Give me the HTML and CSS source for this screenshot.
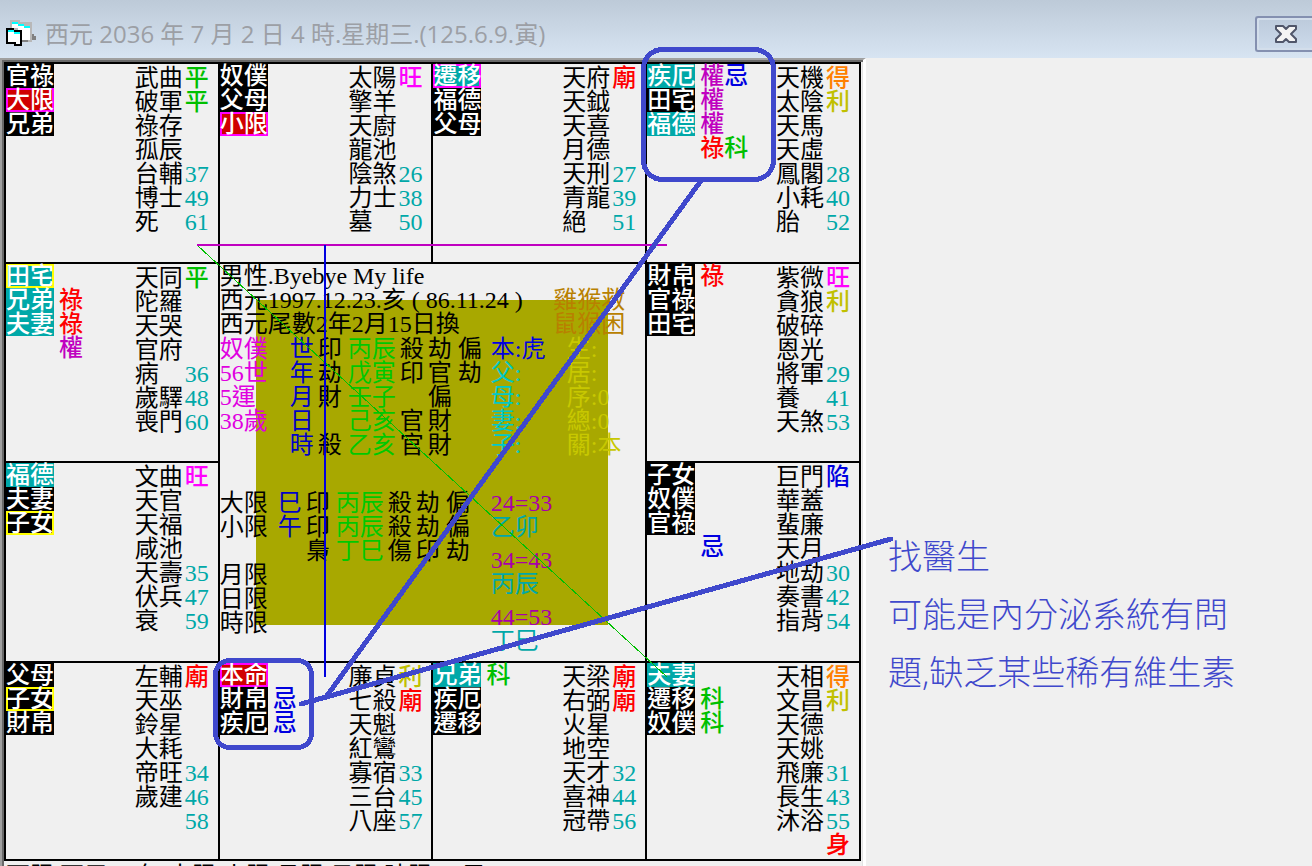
FILE: index.html
```html
<!DOCTYPE html>
<html lang="zh-Hant">
<head>
    <meta charset="UTF-8">
    <meta name="viewport" content="width=device-width, initial-scale=1.0">
    <title>西元 2036 年 7 月 2 日 4 時.星期三.(125.6.9.寅)</title>
    <link rel="stylesheet" href="styles.css">
</head>
<body>
    <!-- Title bar -->
    <header class="titlebar">
        <svg class="app-icon" width="32" height="28" viewBox="0 0 32 28" shape-rendering="crispEdges" aria-hidden="true">
            <path d="M4 0h10v2h12v20H10V10H4z" fill="#b8b8b8"/>
            <path d="M6 4h8v2h10v14H12V8H6z" fill="#fff"/>
            <path d="M6 2h6v2H6zM12 4h6v2h-6zM18 6h6v2h-6z" fill="#00ffff"/>
            <path d="M26 14h2v2h2v4h-4zM16 20h6v2h-6z" fill="#808080"/>
            <path d="M0 8h8v2h8v16H8v-2H0z" fill="#000"/>
            <path d="M2 12h12v12h-4v-2H2z" fill="#fff"/>
            <path d="M2 10h6v2H2zM8 12h6v2H8z" fill="#00ffff"/>
        </svg>
        <h1>西元 2036 年 7 月 2 日 4 時.星期三.(125.6.9.寅)</h1>
        <button class="close" aria-label="Close">
            <svg width="22" height="18" viewBox="0 0 22 18" aria-hidden="true">
                <path d="M1 1h7l3 3 3-3h7v3l-5 5 5 5v3h-7l-3-3-3 3H1v-3l5-5-5-5z" fill="#f4f4f4" stroke="#50566a" stroke-width="2" stroke-linejoin="round"/>
            </svg>
        </button>
    </header>

    <main class="workspace">
        <div class="client">
            <div class="board">
                <!-- Top row -->
                <section class="cell">
                    <ul class="palaces"><li>官祿</li><li class="limit">大限</li><li>兄弟</li></ul>
                    <ul class="stars">
                        <li>武曲<b class="green">平</b></li>
                        <li>破軍<b class="green">平</b></li>
                        <li>祿存</li>
                        <li>孤辰</li>
                        <li>台輔<span>37</span></li>
                        <li>博士<span>49</span></li>
                        <li>死<span>61</span></li>
                    </ul>
                </section>
                <section class="cell">
                    <ul class="palaces"><li>奴僕</li><li>父母</li><li class="limit">小限</li></ul>
                    <ul class="stars">
                        <li>太陽<b class="magenta">旺</b></li>
                        <li>擎羊</li>
                        <li>天廚</li>
                        <li>龍池</li>
                        <li>陰煞<span>26</span></li>
                        <li>力士<span>38</span></li>
                        <li>墓<span>50</span></li>
                    </ul>
                </section>
                <section class="cell">
                    <ul class="palaces"><li class="year moved">遷移</li><li>福德</li><li>父母</li></ul>
                    <ul class="stars">
                        <li>天府<b class="red">廟</b></li>
                        <li>天鉞</li>
                        <li>天喜</li>
                        <li>月德</li>
                        <li>天刑<span>27</span></li>
                        <li>青龍<span>39</span></li>
                        <li>絕<span>51</span></li>
                    </ul>
                </section>
                <section class="cell">
                    <ul class="palaces"><li class="year">疾厄</li><li>田宅</li><li class="year">福德</li></ul>
                    <ul class="marks">
                        <li><b class="purple">權</b><b class="blue">忌</b></li>
                        <li><b class="purple">權</b></li>
                        <li><b class="purple">權</b></li>
                        <li><b class="red">祿</b><b class="green">科</b></li>
                    </ul>
                    <ul class="stars">
                        <li>天機<b class="orange">得</b></li>
                        <li>太陰<b class="gold">利</b></li>
                        <li>天馬</li>
                        <li>天虛</li>
                        <li>鳳閣<span>28</span></li>
                        <li>小耗<span>40</span></li>
                        <li>胎<span>52</span></li>
                    </ul>
                </section>

                <!-- Second row -->
                <section class="cell">
                    <ul class="palaces"><li class="year picked">田宅</li><li class="year">兄弟</li><li class="year">夫妻</li></ul>
                    <ul class="marks">
                        <li></li>
                        <li><b class="red">祿</b></li>
                        <li><b class="red">祿</b></li>
                        <li><b class="purple">權</b></li>
                    </ul>
                    <ul class="stars">
                        <li>天同<b class="green">平</b></li>
                        <li>陀羅</li>
                        <li>天哭</li>
                        <li>官府</li>
                        <li>病<span>36</span></li>
                        <li>歲驛<span>48</span></li>
                        <li>喪門<span>60</span></li>
                    </ul>
                </section>

                <!-- Centre: birth data -->
                <section class="center">
                    <div class="person">
                        <div>
                            <p>男性.Byebye My life</p>
                            <p>西元1997.12.23.亥 ( 86.11.24 )</p>
                            <p>西元尾數2年2月15日換</p>
                        </div>
                        <p class="zodiac">雞猴救<br>鼠猴困</p>
                    </div>

                    <div class="block">
                        <table class="pillars">
                            <tr><td class="pink">奴僕</td><th>世</th><td>印</td><td class="stem">丙辰</td><td>殺</td><td>劫</td><td>偏</td></tr>
                            <tr><td class="pink">56世</td><th>年</th><td>劫</td><td class="stem">戊寅</td><td>印</td><td>官</td><td>劫</td></tr>
                            <tr><td class="pink">5運</td><th>月</th><td>財</td><td class="stem">壬子</td><td></td><td>偏</td><td></td></tr>
                            <tr><td class="pink">38歲</td><th>日</th><td></td><td class="stem">己亥</td><td>官</td><td>財</td><td></td></tr>
                            <tr><td></td><th>時</th><td>殺</td><td class="stem">乙亥</td><td>官</td><td>財</td><td></td></tr>
                        </table>
                        <ul class="kin">
                            <li class="self">本:虎</li>
                            <li>父:</li>
                            <li>母:</li>
                            <li>妻:</li>
                            <li>子:</li>
                        </ul>
                        <ul class="notes">
                            <li>生:</li>
                            <li>居:</li>
                            <li>序:0</li>
                            <li>總:0</li>
                            <li>關:本</li>
                        </ul>
                    </div>

                    <div class="block">
                        <table class="pillars limits">
                            <tr><td>大限</td><th>巳</th><td>印</td><td class="stem">丙辰</td><td>殺</td><td>劫</td><td>偏</td></tr>
                            <tr><td>小限</td><th>午</th><td>印</td><td class="stem">丙辰</td><td>殺</td><td>劫</td><td>偏</td></tr>
                            <tr><td></td><th></th><td>梟</td><td class="stem">丁巳</td><td>傷</td><td>印</td><td>劫</td></tr>
                            <tr><td>月限</td></tr>
                            <tr><td>日限</td></tr>
                            <tr><td>時限</td></tr>
                        </table>
                        <dl class="decades">
                            <dt>24=33</dt><dd>乙卯</dd>
                            <dt>34=43</dt><dd>丙辰</dd>
                            <dt>44=53</dt><dd>丁巳</dd>
                        </dl>
                    </div>
                </section>

                <section class="cell">
                    <ul class="palaces"><li>財帛</li><li>官祿</li><li>田宅</li></ul>
                    <ul class="marks"><li><b class="red">祿</b></li></ul>
                    <ul class="stars">
                        <li>紫微<b class="magenta">旺</b></li>
                        <li>貪狼<b class="gold">利</b></li>
                        <li>破碎</li>
                        <li>恩光</li>
                        <li>將軍<span>29</span></li>
                        <li>養<span>41</span></li>
                        <li>天煞<span>53</span></li>
                    </ul>
                </section>

                <!-- Third row -->
                <section class="cell">
                    <ul class="palaces"><li class="year">福德</li><li>夫妻</li><li class="picked">子女</li></ul>
                    <ul class="stars">
                        <li>文曲<b class="magenta">旺</b></li>
                        <li>天官</li>
                        <li>天福</li>
                        <li>咸池</li>
                        <li>天壽<span>35</span></li>
                        <li>伏兵<span>47</span></li>
                        <li>衰<span>59</span></li>
                    </ul>
                </section>
                <section class="cell">
                    <ul class="palaces"><li>子女</li><li>奴僕</li><li>官祿</li></ul>
                    <ul class="marks">
                        <li></li>
                        <li></li>
                        <li></li>
                        <li><b class="blue">忌</b></li>
                    </ul>
                    <ul class="stars">
                        <li>巨門<b class="blue">陷</b></li>
                        <li>華蓋</li>
                        <li>蜚廉</li>
                        <li>天月</li>
                        <li>地劫<span>30</span></li>
                        <li>奏書<span>42</span></li>
                        <li>指背<span>54</span></li>
                    </ul>
                </section>

                <!-- Bottom row -->
                <section class="cell">
                    <ul class="palaces"><li>父母</li><li class="picked">子女</li><li>財帛</li></ul>
                    <ul class="stars">
                        <li>左輔<b class="red">廟</b></li>
                        <li>天巫</li>
                        <li>鈴星</li>
                        <li>大耗</li>
                        <li>帝旺<span>34</span></li>
                        <li>歲建<span>46</span></li>
                        <li><span>58</span></li>
                    </ul>
                </section>
                <section class="cell">
                    <ul class="palaces"><li class="limit">本命</li><li>財帛</li><li>疾厄</li></ul>
                    <ul class="marks">
                        <li></li>
                        <li><b class="blue">忌</b></li>
                        <li><b class="blue">忌</b></li>
                    </ul>
                    <ul class="stars">
                        <li>廉貞<b class="gold">利</b></li>
                        <li>七殺<b class="red">廟</b></li>
                        <li>天魁</li>
                        <li>紅鸞</li>
                        <li>寡宿<span>33</span></li>
                        <li>三台<span>45</span></li>
                        <li>八座<span>57</span></li>
                    </ul>
                </section>
                <section class="cell">
                    <ul class="palaces"><li class="year">兄弟</li><li>疾厄</li><li>遷移</li></ul>
                    <ul class="marks"><li><b class="green">科</b></li></ul>
                    <ul class="stars">
                        <li>天梁<b class="red">廟</b></li>
                        <li>右弼<b class="red">廟</b></li>
                        <li>火星</li>
                        <li>地空</li>
                        <li>天才<span>32</span></li>
                        <li>喜神<span>44</span></li>
                        <li>冠帶<span>56</span></li>
                    </ul>
                </section>
                <section class="cell">
                    <ul class="palaces"><li class="year">夫妻</li><li>遷移</li><li>奴僕</li></ul>
                    <ul class="marks">
                        <li></li>
                        <li><b class="green">科</b></li>
                        <li><b class="green">科</b></li>
                    </ul>
                    <ul class="stars">
                        <li>天相<b class="orange">得</b></li>
                        <li>文昌<b class="gold">利</b></li>
                        <li>天德</li>
                        <li>天姚</li>
                        <li>飛廉<span>31</span></li>
                        <li>長生<span>43</span></li>
                        <li>沐浴<span>55</span></li>
                        <li><b class="red">身</b></li>
                    </ul>
                </section>
            </div>
            <p class="footer-line">西限.西元.五年.大限.小限.月限.日限.時限.丁巳</p>
        </div>

        <aside class="remark">
            <p>找醫生<br>可能是內分泌系統有問<br>題,缺乏某些稀有維生素</p>
        </aside>
    </main>

    <!-- Aspect lines and hand-drawn marks over the chart -->
    <svg class="overlay" width="1312" height="866" viewBox="0 0 1312 866" fill="none" shape-rendering="crispEdges" aria-hidden="true">
        <path d="M197 245L667 677" stroke="#00c000"/>
        <path d="M197 245H667" stroke="#c000c0" stroke-width="2"/>
        <path d="M325 245V677" stroke="#0000e0" stroke-width="2"/>
        <g stroke="#3f48cc" stroke-width="5" stroke-linecap="round">
            <rect x="643.5" y="49.5" width="130" height="130" rx="19"/>
            <rect x="215.5" y="660.5" width="96" height="87" rx="14"/>
            <path d="M700 182L326 697M301 704L891 539"/>
        </g>
    </svg>
</body>
</html>
```
FILE: styles.css
```css
/* General Styles */
* {
    box-sizing: border-box;
}

body {
    margin: 0;
    height: 100vh;
    overflow: hidden;
    position: relative;
    display: flex;
    flex-direction: column;
    background-color: #f0f0f0;
    color: #000;
    font-family: "Liberation Serif", "Noto Sans CJK TC", serif;
    font-size: 24px;
    line-height: 24px;
}

ul, dl, dd, p, h1 {
    margin: 0;
    padding: 0;
    list-style: none;
}

b, th {
    font-weight: 400;
}

/* Title Bar */
.titlebar {
    flex: none;
    height: 58px;
    padding: 10px 0 0 6px;
    display: flex;
    align-items: center;
    background: linear-gradient(#bdcad8, #d7e4f2);
}

.titlebar h1 {
    margin-left: 7px;
    font-family: "Open Sans", "Noto Sans CJK TC", sans-serif;
    font-size: 24px;
    font-weight: 400;
    line-height: 26px;
    color: #9c9fa5;
}

.close {
    margin-left: auto;
    width: 57px;
    height: 36px;
    padding: 0 0 0 2px;
    display: flex;
    align-items: center;
    justify-content: center;
    border: 2px solid #8490b0;
    border-right: none;
    border-radius: 3px 0 0 3px;
    background: linear-gradient(#bccadb, #cddbeb);
    box-shadow: inset 2px 2px #d3deeb, inset 0 -2px #d3deeb;
}

/* Layout */
.workspace {
    flex: 1;
    min-height: 0;
    display: grid;
    grid-template-columns: 66% 1fr;
}

.client {
    border-style: solid;
    border-width: 2px 3px 0 2px;
    border-color: #a0a0a0 #fff #a0a0a0 #a0a0a0;
    padding: 2px 2px 0 2px;
    box-shadow: inset 2px 2px #696969, inset -1px 0 #e3e3e3;
}

/* Chart Board */
.board {
    display: grid;
    grid-template-columns: repeat(4, 1fr);
    grid-template-rows: 198px 197px 198px 196px;
    gap: 2px;
    padding: 2px;
    background-color: #000;
}

.cell {
    display: flex;
    background-color: #f0f0f0;
}

/* Palace Tags */
.palaces li {
    width: 48px;
    height: 24px;
    background-color: #000;
    color: #fff;
    font-weight: 500;
}

.palaces .year {
    background-color: #00a8a8;
}

.palaces .limit {
    background-color: #d00000;
    box-shadow: inset 0 0 0 2px #ff00ff;
}

.palaces .moved {
    box-shadow: inset 0 0 0 2px #ff00ff;
}

.palaces .picked {
    box-shadow: inset 0 0 0 2px #ffff00;
}

/* Transformation Marks */
.marks {
    margin-left: 5px;
}

.marks li {
    height: 24px;
}

.marks b,
.stars b {
    font-weight: 500;
}

/* Stars */
.stars {
    width: 74px;
    margin-left: auto;
    margin-right: 9px;
    padding-top: 2px;
}

.stars li {
    display: flex;
    justify-content: space-between;
    height: 24px;
}

.stars li > :only-child {
    margin-left: auto;
}

.stars span {
    color: #00a8a8;
}

.red { color: #ff0000; }
.green { color: #00c000; }
.blue { color: #0000e0; }
.purple { color: #c000c0; }
.magenta { color: #ff00ff; }
.orange { color: #ff8000; }
.gold { color: #c0c000; }

/* Centre Block */
.center {
    grid-column: 2 / 4;
    grid-row: 2 / 4;
    background: linear-gradient(#a8a800, #a8a800) 36px 36px / 352px 325px no-repeat, #f0f0f0;
}

.person {
    display: flex;
    justify-content: space-between;
    padding-right: 20px;
}

.zodiac {
    padding-top: 24px;
    color: #b88000;
}

.block {
    display: flex;
    padding-top: 1px;
    margin-bottom: 33px;
}

.pillars {
    width: 271px;
    table-layout: fixed;
    border-collapse: collapse;
    align-self: flex-start;
}

.pillars td,
.pillars th {
    height: 24px;
    padding: 0;
    text-align: left;
    white-space: nowrap;
}

.pillars th { color: #0000c8; }
.pillars .stem { color: #00c800; }
.pillars .pink { color: #e000e0; }

.pillars td:nth-child(1) { width: 70px; }
.pillars th:nth-child(2) { width: 28px; }
.pillars td:nth-child(3) { width: 30px; }
.pillars td:nth-child(4) { width: 52px; }
.pillars td:nth-child(5) { width: 28px; }
.pillars td:nth-child(6) { width: 30px; }

.limits td:nth-child(1) { width: 58px; }

.kin {
    width: 76px;
    color: #00c8c8;
}

.kin .self {
    color: #0000e0;
}

.notes {
    color: #c8c800;
}

.decades dt {
    color: #a800a8;
}

.decades dd {
    margin-bottom: 9px;
    color: #00a8a8;
}

.footer-line {
    padding: 3px 0 0 2px;
    white-space: nowrap;
}

/* Remark */
.remark {
    padding: 469px 0 0 22px;
    font-family: "Open Sans", "Noto Sans CJK TC", sans-serif;
    font-size: 34px;
    font-weight: 300;
    line-height: 58px;
    color: #3f48cc;
    white-space: nowrap;
}

.overlay {
    position: absolute;
    top: 0;
    left: 0;
    pointer-events: none;
}
```
